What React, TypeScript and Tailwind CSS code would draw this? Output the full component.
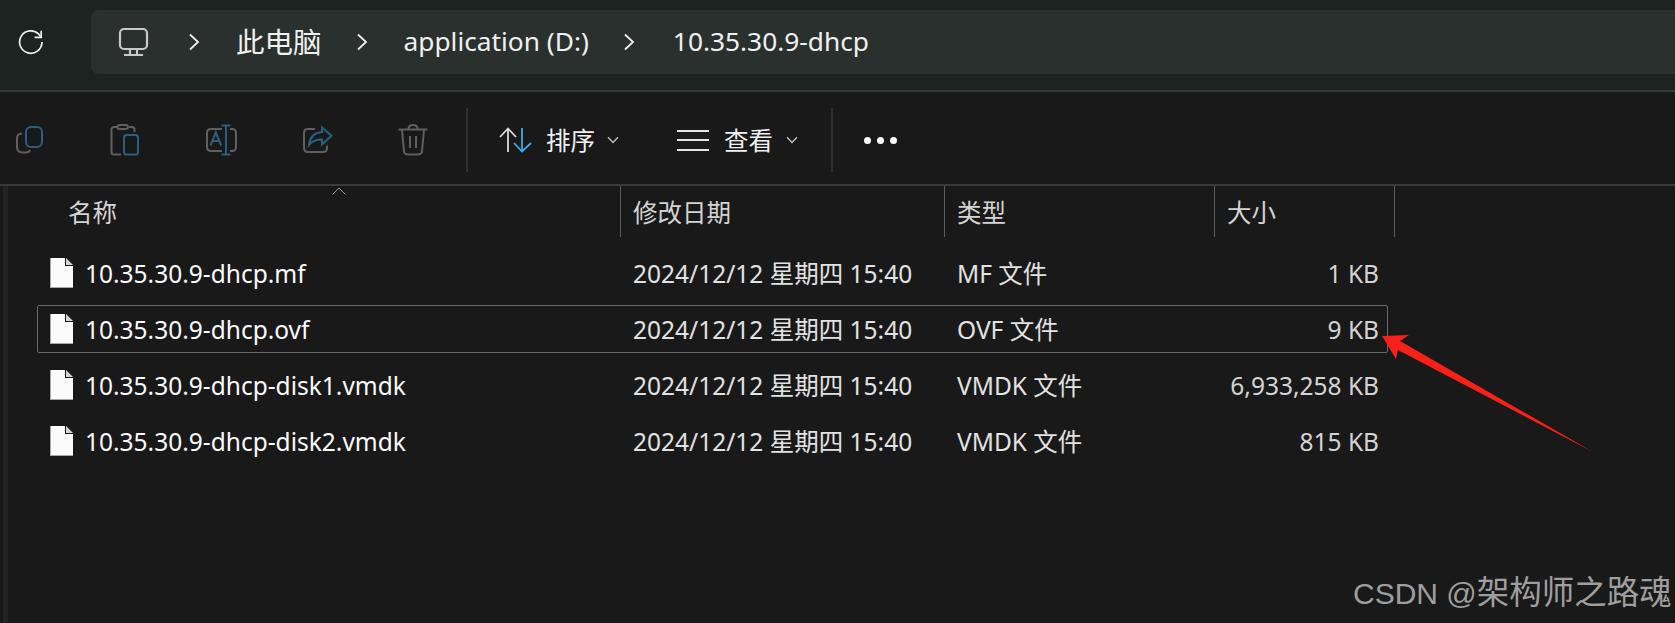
import React from "react";

const FONT = "font-['Noto_Sans','Noto_Sans_CJK_SC',sans-serif]";
const GRAY = "#5f5f5f";
const BLUE = "#2b5f7d";

type FileRow = { name: string; kind: string; size: string; selected?: boolean };

const FILES: FileRow[] = [
  { name: "10.35.30.9-dhcp.mf", kind: "MF 文件", size: "1 KB" },
  { name: "10.35.30.9-dhcp.ovf", kind: "OVF 文件", size: "9 KB", selected: true },
  { name: "10.35.30.9-dhcp-disk1.vmdk", kind: "VMDK 文件", size: "6,933,258 KB" },
  { name: "10.35.30.9-dhcp-disk2.vmdk", kind: "VMDK 文件", size: "815 KB" },
];

const Chevron = () => (
  <svg width="12" height="18" viewBox="0 0 12 18" fill="none" className="shrink-0">
    <path d="M2 1.5 L10 9 L2 16.5" stroke="#eeeeee" strokeWidth="1.8" />
  </svg>
);

const SmallChevron = () => (
  <svg width="12" height="8" viewBox="0 0 12 8" fill="none" className="shrink-0">
    <path d="M1 1.2 L6 6.5 L11 1.2" stroke="#bdbdbd" strokeWidth="1.4" />
  </svg>
);

const FileIcon = () => (
  <svg width="23" height="30" viewBox="0 0 23 30" className="shrink-0">
    <path d="M0 0 H15 V8 H23 V30 H0 Z" fill="#fbfbfb" />
    <path d="M16 0 L23 7 H16 Z" fill="#d8d8d8" />
    <path d="M0.5 30 V0 M0 29.5 H23" stroke="#a8a8a8" strokeWidth="1" />
  </svg>
);

const CopyIcon = () => (
  <svg width="32" height="32" viewBox="0 0 32 32" fill="none" strokeWidth="2">
    <rect x="13" y="3" width="16" height="20" rx="5" stroke={BLUE} />
    <path d="M9 9.5 C6 9.5 4 11.5 4 14 V23 C4 26.5 6.5 28.5 10 28.5 H13 C15 28.5 16.5 27.5 17 26" stroke={GRAY} />
  </svg>
);

const PasteIcon = () => (
  <svg width="32" height="32" viewBox="0 0 32 32" fill="none" strokeWidth="2">
    <rect x="8.5" y="1" width="10.5" height="4" rx="2" stroke={GRAY} />
    <path d="M8 3 H5 C3.5 3 2.5 4 2.5 5.5 V28 C2.5 29.5 3.5 30.5 5 30.5 H12" stroke={GRAY} />
    <path d="M19.5 3 H23 C24.5 3 25.5 4 25.5 5.5 V8" stroke={GRAY} />
    <rect x="15" y="11" width="14" height="19.5" rx="2.5" stroke={BLUE} />
  </svg>
);

const RenameIcon = () => (
  <svg width="32" height="32" viewBox="0 0 32 32" fill="none" strokeWidth="2">
    <path d="M17 5 H6 C3.5 5 2 6.5 2 9 V23 C2 25.5 3.5 27 6 27 H17" stroke={GRAY} />
    <path d="M25 5 H27 C29.5 5 31 6.5 31 9 V23 C31 25.5 29.5 27 27 27 H25" stroke={GRAY} />
    <path d="M16.5 1.5 H25.5 M21 1.5 V30.5 M16.5 30.5 H25.5" stroke={BLUE} />
    <path d="M5.5 21.5 L10.8 8.5 L16.2 21.5 M7.5 17 H14.2" stroke={BLUE} />
  </svg>
);

const ShareIcon = () => (
  <svg width="32" height="32" viewBox="0 0 32 32" fill="none" strokeWidth="2">
    <path d="M14 5 H7 C4.5 5 3 6.5 3 9 V24 C3 26.5 4.5 28 7 28 H22 C24.5 28 26 26.5 26 24 V21.5" stroke={GRAY} />
    <path d="M21 3.5 L30.5 11.8 L21 20.5 V15.5 C15 15.5 11 17 8 21 C9 13 14 8.5 21 8 Z" stroke={BLUE} />
  </svg>
);

const TrashIcon = () => (
  <svg width="32" height="32" viewBox="0 0 32 32" fill="none" strokeWidth="2" stroke={GRAY}>
    <path d="M1.5 5.5 H30.5" />
    <path d="M11.5 5 C11.5 2.5 13.5 1 16 1 C18.5 1 20.5 2.5 20.5 5" />
    <path d="M5 6 L7 27 C7.3 29.5 8.5 30.5 10.5 30.5 H21.5 C23.5 30.5 24.7 29.5 25 27 L27 6" />
    <path d="M13 12 V24 M19 12 V24" />
  </svg>
);

const MonitorIcon = () => (
  <svg width="32" height="30" viewBox="0 0 32 30" fill="none" stroke="#c9c9c9" strokeWidth="2.2" className="shrink-0">
    <rect x="2" y="2" width="27" height="20" rx="4" />
    <path d="M12 22 V27 M19 22 V27 M6 28 H25" />
  </svg>
);

const RefreshIcon = () => (
  <svg width="26" height="26" viewBox="0 0 26 26" fill="none" stroke="#eeeeee" strokeWidth="1.7" className="shrink-0">
    <path d="M24 13 A11.2 11.2 0 1 1 20.8 5.2 L23 8" />
    <path d="M23.2 1.8 V8.4 H16.6" />
  </svg>
);

export default function App() {
  return (
    <div className={`relative h-[623px] w-[1675px] overflow-hidden bg-[#191919] ${FONT}`}>
      {/* address bar */}
      <div className="flex h-[90px] items-start bg-[#1c2422] pt-[10px]">
        <div className="flex h-16 w-[91px] items-center pl-[18px]">
          <RefreshIcon />
        </div>
        <div className="flex h-16 flex-1 items-center rounded-l-lg bg-[#2a302e] pl-[27px] text-[26.3px] text-[#f0f0f0]">
          <MonitorIcon />
          <div className="ml-[38px]"><Chevron /></div>
          <span className="ml-[36px] text-[28.5px] leading-none">此电脑</span>
          <div className="ml-[34px]"><Chevron /></div>
          <span className="ml-[36px]">application (D:)</span>
          <div className="ml-[34px]"><Chevron /></div>
          <span className="ml-[38px]">10.35.30.9-dhcp</span>
        </div>
      </div>
      <div className="h-[2px] bg-[#3a3a3a]" />

      {/* toolbar */}
      <div className="flex h-[92px] items-center pl-[13px] pt-[4px]">
        <div className="flex gap-16">
          <CopyIcon />
          <PasteIcon />
          <RenameIcon />
          <ShareIcon />
          <TrashIcon />
        </div>
        <div className="ml-[37px] h-16 w-[2px] bg-[#2f2f2f]" />
        <svg width="34" height="26" viewBox="0 0 34 26" fill="none" strokeWidth="1.8" className="ml-[31px] shrink-0">
          <path d="M9 25 V2 M1 10 L9 1.5 L17 10" stroke="#d8d8d8" />
          <path d="M23 1 V24 M15 16 L23 24.5 L32 16" stroke="#41a9e8" />
        </svg>
        <span className="ml-[13px] mt-[3px] text-[24.5px] leading-none text-[#f0f0f0]">排序</span>
        <div className="ml-3"><SmallChevron /></div>
        <div className="ml-[58px] flex h-[21px] w-8 flex-col justify-between">
          <div className="h-[2px] bg-[#e4e4e4]" />
          <div className="h-[2px] bg-[#e4e4e4]" />
          <div className="h-[2px] bg-[#e4e4e4]" />
        </div>
        <span className="ml-[15px] mt-[3px] text-[24.5px] leading-none text-[#f0f0f0]">查看</span>
        <div className="ml-[13px]"><SmallChevron /></div>
        <div className="ml-[33px] h-16 w-[2px] bg-[#2f2f2f]" />
        <div className="ml-[31px] flex gap-[6px]">
          <div className="size-[7px] rounded-full bg-white" />
          <div className="size-[7px] rounded-full bg-white" />
          <div className="size-[7px] rounded-full bg-white" />
        </div>
      </div>
      <div className="h-[2px] bg-[#3a3a3a]" />

      {/* column headers */}
      <div className="flex h-[51px] text-[24.5px] leading-none text-[#d4d4d4]">
        <div className="flex w-[621px] items-center border-r border-[#5c5c5c] pl-[68px] pt-[3px]">名称</div>
        <div className="flex w-[324px] items-center border-r border-[#5c5c5c] pl-3 pt-[3px]">修改日期</div>
        <div className="flex w-[270px] items-center border-r border-[#5c5c5c] pl-3 pt-[3px]">类型</div>
        <div className="flex w-[180px] items-center border-r border-[#5c5c5c] pl-3 pt-[3px]">大小</div>
      </div>

      {/* rows */}
      <div className="mt-3 flex flex-col gap-2">
        {FILES.map((f) => (
          <div
            key={f.name}
            className={`ml-[37px] flex h-12 w-[1351px] items-center rounded-[2px] border pl-3 pr-[8px] text-[24.5px] ${
              f.selected ? "border-[#6a6a6a]" : "border-transparent"
            }`}
          >
            <FileIcon />
            <span className="ml-3 mt-[2px] w-[548px] shrink-0 leading-none text-[#fafafa]">{f.name}</span>
            <span className="mt-[2px] w-[324px] shrink-0 leading-none text-[#e2e2e2]">2024/12/12 星期四 15:40</span>
            <span className="mt-[2px] leading-none text-[#e2e2e2]">{f.kind}</span>
            <span className="ml-auto mt-[2px] leading-none text-[#d4d4d4]">{f.size}</span>
          </div>
        ))}
      </div>

      {/* faint stripe along the left edge of the list */}
      <div className="absolute bottom-0 left-[3px] top-[186px] w-[5px] bg-[#232323]" />

      {/* sort caret sitting on the header's top edge */}
      <svg width="14" height="8" viewBox="0 0 14 8" fill="none" className="absolute left-[332px] top-[187px]">
        <path d="M0.5 7.5 L7 1 L13.5 7.5" stroke="#9a9a9a" strokeWidth="1" />
      </svg>

      {/* red annotation arrow */}
      <svg width="230" height="130" viewBox="0 0 230 130" className="absolute left-[1375px] top-[330px]">
        <path d="M7 6 L34 5 L25 11 L218 122 L23 20 L21 29 Z" fill="#f8211a" />
      </svg>

      {/* watermark */}
      <div className="absolute left-[1353px] top-[573px] font-['Liberation_Sans','Noto_Sans_CJK_SC',sans-serif] text-[30px] leading-[40px] whitespace-nowrap text-[#9e9e9e]">
        CSDN @<span className="text-[32.5px]">架构师之路魂</span>
      </div>
    </div>
  );
}
